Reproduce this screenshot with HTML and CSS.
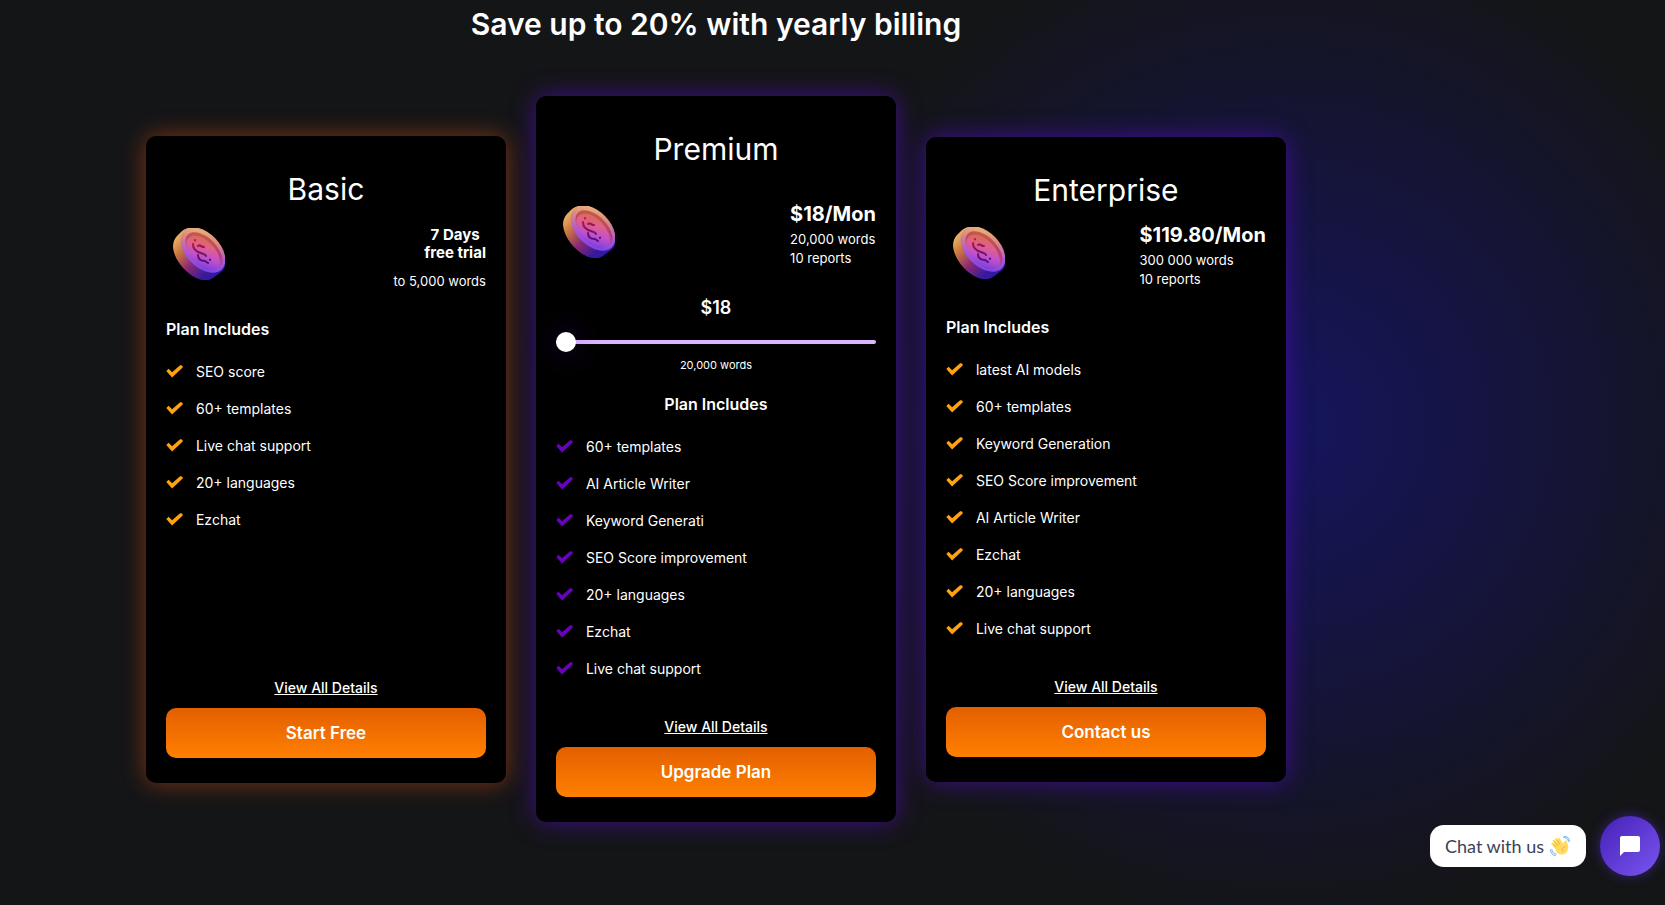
FILE: index.html
```html
<!DOCTYPE html>
<html lang="en">
<head>
    <meta charset="UTF-8">
    <meta name="viewport" content="width=device-width, initial-scale=1.0">
    <title>Pricing</title>
    <link rel="stylesheet" href="styles.css">
</head>
<body>
    <!-- shared icons -->
    <svg class="sprite" width="0" height="0" aria-hidden="true">
        <defs>
            <linearGradient id="coinSide" x1="0" y1="0" x2="1" y2="1">
                <stop offset="0.1" stop-color="#f0b868"/>
                <stop offset="0.3" stop-color="#c8743f"/>
                <stop offset="0.52" stop-color="#8c2a74"/>
                <stop offset="0.75" stop-color="#3a1a98"/>
                <stop offset="1" stop-color="#2a10c0"/>
            </linearGradient>
            <linearGradient id="coinRim" x1="0" y1="0" x2="1" y2="1">
                <stop offset="0" stop-color="#f6cf86"/>
                <stop offset="0.3" stop-color="#e0907a"/>
                <stop offset="0.6" stop-color="#b058d0"/>
                <stop offset="1" stop-color="#5a3cf0"/>
            </linearGradient>
            <linearGradient id="coinFace" x1="0" y1="0" x2="1" y2="1">
                <stop offset="0.05" stop-color="#d8703c"/>
                <stop offset="0.35" stop-color="#e0608c"/>
                <stop offset="0.6" stop-color="#c050d0"/>
                <stop offset="1" stop-color="#5a34e0"/>
            </linearGradient>
            <linearGradient id="coinEdge" x1="0" y1="0" x2="1" y2="1">
                <stop offset="0" stop-color="#c86a2c"/>
                <stop offset="0.5" stop-color="#b83c78"/>
                <stop offset="1" stop-color="#8a60f0"/>
            </linearGradient>
            <linearGradient id="coinSign" x1="0" y1="0" x2="0" y2="1">
                <stop offset="0" stop-color="#c01c30"/>
                <stop offset="1" stop-color="#4a1080"/>
            </linearGradient>
        </defs>
        <symbol id="coin" viewBox="0 0 52 52">
            <path d="M8 4C12 0 17 -1 23 1C36 4 50 18 52 33C53 38 51 42 48 44L40 50C36 53 29 53 23 50C11 44 1 31 0 19C0 15 1 11 4 8Z" fill="url(#coinSide)"/>
            <ellipse cx="30" cy="22" rx="27" ry="17" transform="rotate(46 30 22)" fill="url(#coinRim)"/>
            <ellipse cx="31" cy="23" rx="23" ry="13" transform="rotate(46 31 23)" fill="url(#coinEdge)"/>
            <ellipse cx="30" cy="25" rx="21" ry="12" transform="rotate(47 30 25)" fill="url(#coinFace)"/>
            <path d="M22 12V12.500M31 19C28 19 27 16 25 18M20 16C20 21 24 24 28 25C31 26 33 27 33 28M25 27C25 31 28 33 32 33L35 35M37 31.500V32" fill="none" stroke="url(#coinSign)" stroke-width="2.100" stroke-linecap="round" stroke-linejoin="round"/>
        </symbol>
        <symbol id="check" viewBox="0 0 17 13">
            <path d="M0.300 6L2.600 3.700L6.100 7.300L13.800 0.500C15 -0.200 17.200 0.800 16.700 2.500L6.100 12.600Z" fill="currentColor"/>
        </symbol>
    </svg>

    <main class="pricing">
        <h1>Save up to 20% with yearly billing</h1>

        <div class="plans">
            <section class="plan plan-basic">
                <h2>Basic</h2>
                <div class="plan-top">
                    <svg class="coin"><use href="#coin"/></svg>
                    <div class="trial">
                        <p class="trial-days">7 Days<br>free trial</p>
                        <p class="small">to 5,000 words</p>
                    </div>
                </div>
                <h3>Plan Includes</h3>
                <ul>
                    <li><svg class="check"><use href="#check"/></svg>SEO score</li>
                    <li><svg class="check"><use href="#check"/></svg>60+ templates</li>
                    <li><svg class="check"><use href="#check"/></svg>Live chat support</li>
                    <li><svg class="check"><use href="#check"/></svg>20+ languages</li>
                    <li><svg class="check"><use href="#check"/></svg>Ezchat</li>
                </ul>
                <a class="details" href="#">View All Details</a>
                <button class="buy" type="button">Start Free</button>
            </section>

            <section class="plan plan-premium">
                <h2>Premium</h2>
                <div class="plan-top">
                    <svg class="coin"><use href="#coin"/></svg>
                    <div class="price">
                        <p class="amount">$18/Mon</p>
                        <p class="small">20,000 words</p>
                        <p class="small">10 reports</p>
                    </div>
                </div>
                <label class="range-price" for="words">$18</label>
                <input class="range" type="range" id="words" name="words" min="0" max="10" value="0">
                <p class="range-words">20,000 words</p>
                <h3>Plan Includes</h3>
                <ul>
                    <li><svg class="check"><use href="#check"/></svg>60+ templates</li>
                    <li><svg class="check"><use href="#check"/></svg>AI Article Writer</li>
                    <li><svg class="check"><use href="#check"/></svg>Keyword Generati</li>
                    <li><svg class="check"><use href="#check"/></svg>SEO Score improvement</li>
                    <li><svg class="check"><use href="#check"/></svg>20+ languages</li>
                    <li><svg class="check"><use href="#check"/></svg>Ezchat</li>
                    <li><svg class="check"><use href="#check"/></svg>Live chat support</li>
                </ul>
                <a class="details" href="#">View All Details</a>
                <button class="buy" type="button">Upgrade Plan</button>
            </section>

            <section class="plan plan-enterprise">
                <h2>Enterprise</h2>
                <div class="plan-top">
                    <svg class="coin"><use href="#coin"/></svg>
                    <div class="price">
                        <p class="amount">$119.80/Mon</p>
                        <p class="small">300 000 words</p>
                        <p class="small">10 reports</p>
                    </div>
                </div>
                <h3>Plan Includes</h3>
                <ul>
                    <li><svg class="check"><use href="#check"/></svg>latest AI models</li>
                    <li><svg class="check"><use href="#check"/></svg>60+ templates</li>
                    <li><svg class="check"><use href="#check"/></svg>Keyword Generation</li>
                    <li><svg class="check"><use href="#check"/></svg>SEO Score improvement</li>
                    <li><svg class="check"><use href="#check"/></svg>AI Article Writer</li>
                    <li><svg class="check"><use href="#check"/></svg>Ezchat</li>
                    <li><svg class="check"><use href="#check"/></svg>20+ languages</li>
                    <li><svg class="check"><use href="#check"/></svg>Live chat support</li>
                </ul>
                <a class="details" href="#">View All Details</a>
                <button class="buy" type="button">Contact us</button>
            </section>
        </div>
    </main>

    <div class="chat">
        <div class="chat-label">
            Chat with us
            <svg class="wave" viewBox="0 0 20 20" aria-hidden="true">
                <g fill="none" stroke-linecap="round">
                    <path d="M5.500 11L2.500 7.800M7 9.500L3.800 5M9 8L6 3.200M11.500 7.500L8.800 3" stroke="#ffdc5d" stroke-width="2.400"/>
                    <path d="M15.500 10.500C14.200 8.500 14.800 6.500 15.800 5.500" stroke="#ffdc5d" stroke-width="2.200"/>
                </g>
                <path d="M3.500 9.500L11.500 5.500L14.500 8.500L17 6C18.500 9 19 13 16.500 16.500C13.500 19.500 9 19 7 16.500Z" fill="#ffdc5d"/>
                <path d="M5.800 10.800L3.800 8.500M7.800 9.500L5 5.800M9.800 8.200L7.600 4.800M15 10.500C12.500 11 12 13 12.500 15" fill="none" stroke="#ef9645" stroke-width="0.700" stroke-linecap="round"/>
                <path d="M14 1.500C16.500 1.500 18.200 3 18.500 5.500M14 0.400C17.500 0.200 19.500 2.500 19.600 5M0.500 14C0.500 17 2.500 19.500 5.500 19.500M1.800 13.500C2 16 3.500 18 6 18" fill="none" stroke="#5dadec" stroke-width="0.900" stroke-linecap="round"/>
            </svg>
        </div>
        <button class="chat-button" type="button" aria-label="Open chat">
            <svg viewBox="0 0 20 20" width="20" height="20">
                <path d="M2 0H18C19.200 0 20 0.800 20 2V14C20 15.200 19.200 16 18 16H4L0 20V2C0 0.800 0.800 0 2 0Z" fill="#fff"/>
            </svg>
        </button>
    </div>
</body>
</html>
```

FILE: styles.css
```css
*{
    margin: 0;
    padding: 0;
    box-sizing: border-box;
}
body{
    min-height: 100vh;
    background-color: #141517;
    background-image: radial-gradient(circle 500px at 77% 47%, #15155e, #15143a 52%, rgba(20, 21, 23, 0));
    color: white;
    font-family: 'Inter', sans-serif;
    font-size: 14px;
}
.sprite{
    display: block;
}
.pricing{
    padding: 4px 14% 40px 0;
}
h1{
    font-size: 30px;
    line-height: 40px;
    font-weight: 600;
    text-align: center;
    margin-bottom: 52px;
}
.plans{
    display: flex;
    justify-content: center;
    align-items: center;
    gap: 30px;
}

.plan{
    width: 360px;
    padding: 29px 20px 25px;
    background-color: black;
    border-radius: 10px;
    display: flex;
    flex-direction: column;
}
.plan-basic{
    box-shadow: 0 0 25px rgba(255, 90, 20, 0.45);
}
.plan-premium,
.plan-enterprise{
    box-shadow: 0 0 25px rgba(84, 10, 200, 0.65);
}
h2{
    font-size: 30px;
    line-height: 48px;
    font-weight: 400;
    text-align: center;
}
.plan-top{
    display: flex;
    justify-content: space-between;
    align-items: flex-start;
    margin-top: 5px;
    margin-bottom: 26px;
}
.plan-basic .plan-top{
    margin-top: 7px;
}
.plan-premium .plan-top{
    margin-top: 25px;
    margin-bottom: 28px;
}
.coin{
    width: 52px;
    height: 52px;
    margin: 8px 7px;
}
.amount{
    font-size: 20px;
    line-height: 32px;
    font-weight: 700;
}
.small{
    font-size: 13px;
    line-height: 19px;
    font-weight: 400;
}
.trial{
    display: flex;
    flex-direction: column;
    align-items: flex-end;
    padding-top: 6px;
}
.trial-days{
    font-size: 15px;
    line-height: 18px;
    font-weight: 700;
    text-align: center;
    margin-bottom: 10px;
}
h3{
    font-size: 16px;
    line-height: 24px;
    font-weight: 600;
    margin-bottom: 12px;
}
.plan-premium h3{
    text-align: center;
}

/* slider */
.range-price{
    font-size: 18px;
    line-height: 24px;
    font-weight: 600;
    text-align: center;
    margin-bottom: 12px;
}
.range{
    -webkit-appearance: none;
    appearance: none;
    width: 100%;
    height: 20px;
    background: transparent;
    margin-bottom: 5px;
}
.range::-webkit-slider-runnable-track{
    height: 4px;
    background-color: #dcb5ff;
    border-radius: 2px;
}
.range::-webkit-slider-thumb{
    -webkit-appearance: none;
    width: 20px;
    height: 20px;
    margin-top: -8px;
    border-radius: 50%;
    background-color: white;
    box-shadow: 0 0 30px rgba(106, 0, 192, 0.4);
}
.range-words{
    font-size: 11px;
    line-height: 16px;
    text-align: center;
    margin-bottom: 19px;
}

ul{
    list-style: none;
    margin-bottom: 30px;
}
.plan-basic ul{
    min-height: 295px;
}
li{
    display: flex;
    align-items: center;
    gap: 13px;
    line-height: 37px;
}
.check{
    width: 17px;
    height: 13px;
    color: #ffa20d;
}
.plan-premium .check{
    color: #6a00c0;
}
.details{
    align-self: center;
    color: white;
    line-height: 20px;
    font-weight: 500;
    margin-bottom: 10px;
}
.buy{
    height: 50px;
    border: none;
    border-radius: 10px;
    background: linear-gradient(#e35f00, #ff8000);
    color: white;
    font-family: inherit;
    font-size: 17px;
    font-weight: 600;
}

/* chat widget stays over the page */
.chat{
    position: fixed;
    right: 5px;
    bottom: 29px;
    display: flex;
    align-items: center;
    gap: 14px;
}
.chat-label{
    display: flex;
    align-items: center;
    gap: 6px;
    height: 42px;
    padding: 0 16px 0 15px;
    border-radius: 14px;
    background-color: white;
    color: #3c4258;
    font-family: 'Lato', sans-serif;
    font-size: 18px;
}
.wave{
    width: 20px;
    height: 20px;
}
.chat-button{
    display: flex;
    justify-content: center;
    align-items: center;
    width: 60px;
    height: 60px;
    border: none;
    border-radius: 50%;
    background: linear-gradient(135deg, #4420b8, #7a55f0);
    box-shadow: 0 0 12px rgba(90, 50, 220, 0.5);
}
```
